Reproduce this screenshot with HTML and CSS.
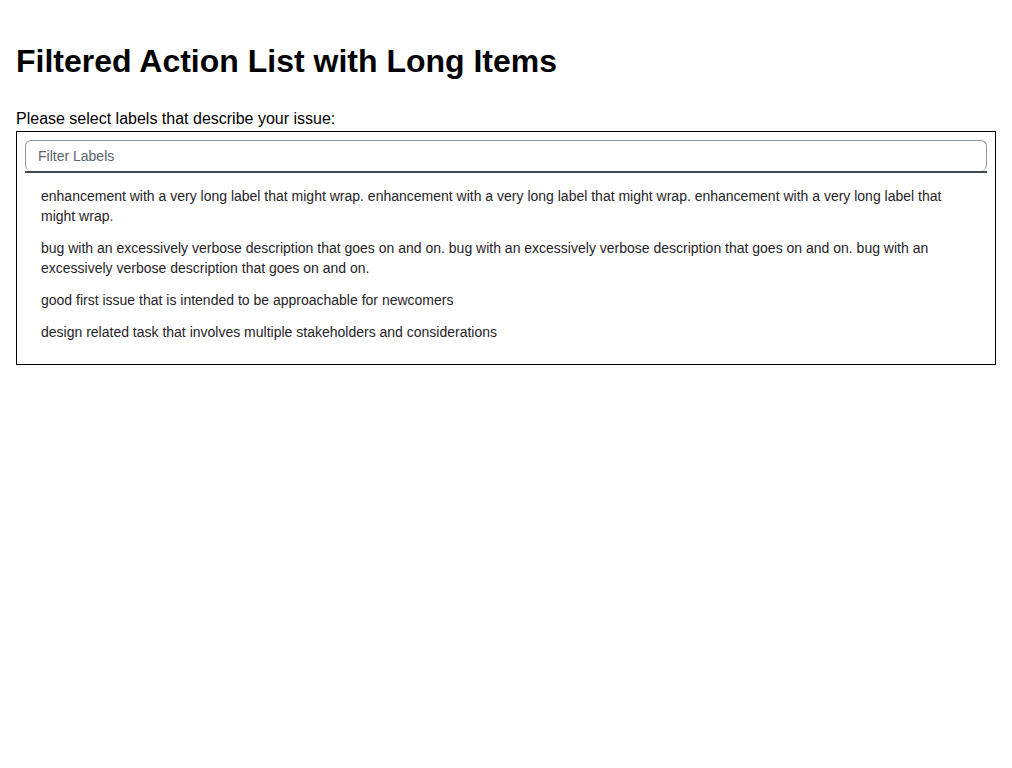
FILE: index.html
```html
<!DOCTYPE html>
<html lang="en">
<head>
<meta charset="utf-8">
<title>Filtered Action List with Long Items</title>
<link rel="stylesheet" href="styles.css">
</head>
<body>
<main class="page">
  <h1 class="title">Filtered Action List with Long Items</h1>
  <label class="prompt" for="filter">Please select labels that describe your issue:</label>
  <div class="panel">
    <div class="filter-wrap">
      <input id="filter" class="filter" type="text" placeholder="Filter Labels">
    </div>
    <ul class="list">
      <li class="item">enhancement with a very long label that might wrap. enhancement with a very long label that might wrap. enhancement with a very long label that might wrap.</li>
      <li class="item">bug with an excessively verbose description that goes on and on. bug with an excessively verbose description that goes on and on. bug with an excessively verbose description that goes on and on.</li>
      <li class="item">good first issue that is intended to be approachable for newcomers</li>
      <li class="item">design related task that involves multiple stakeholders and considerations</li>
    </ul>
  </div>
</main>
</body>
</html>
```
FILE: styles.css
```css
html, body {
  margin: 0;
  padding: 0;
  background: #ffffff;
}
body {
  font-family: "Liberation Sans", Arial, sans-serif;
  color: #000;
}
.page {
  padding: 0 16px 16px;
}
.title {
  font-size: 32px;
  font-weight: 700;
  line-height: 37px;
  margin: 43px 0 30px;
}
.prompt {
  display: block;
  font-size: 16px;
  line-height: 18px;
  margin-bottom: 3px;
}
.panel {
  border: 1px solid #000;
  padding: 8px 8px 16px;
}
.filter-wrap {
  border-bottom: 2px solid #424a53;
}
.filter {
  display: block;
  box-sizing: border-box;
  width: 100%;
  height: 31px;
  border: 1px solid #8c959f;
  border-bottom: none;
  border-radius: 6px;
  padding: 0 12px;
  font-family: "Liberation Sans", Arial, sans-serif;
  font-size: 14px;
  color: #1f2328;
  background: #fff;
  outline: none;
}
.filter::placeholder {
  color: #59636e;
}
.list {
  list-style: none;
  margin: 0;
  padding: 7px 0 0;
}
.item {
  padding: 6px 16px;
  font-size: 14px;
  line-height: 20px;
  color: #1f2328;
}
```
